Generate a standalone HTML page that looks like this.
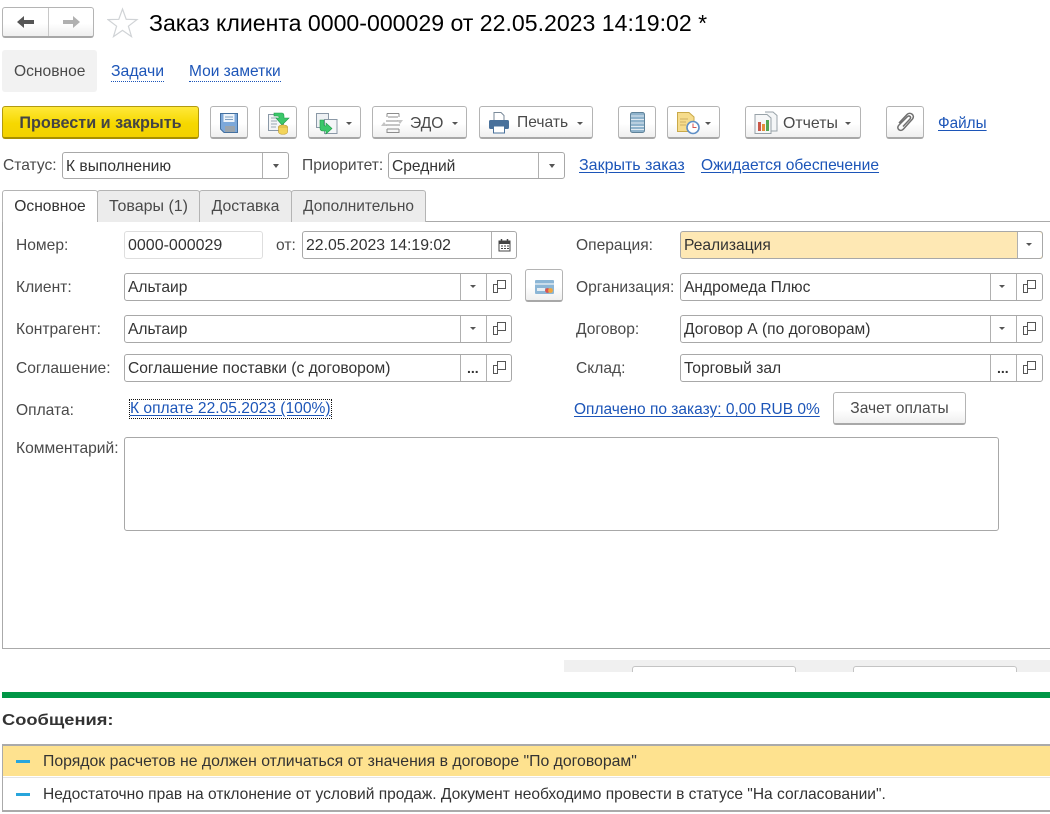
<!DOCTYPE html>
<html lang="ru"><head><meta charset="utf-8"><title>Заказ клиента</title>
<style>
html,body{margin:0;padding:0;background:#fff}
body{position:relative;width:1050px;height:814px;overflow:hidden;font:15.6px/18px "Liberation Sans","Noto Sans CJK SC",sans-serif;color:#333}
.a{position:absolute;white-space:nowrap}
.l{position:absolute;white-space:nowrap;color:#4a4a4a;height:18px;margin-top:2px}
.lk{position:absolute;white-space:nowrap;color:#1c55b8;text-decoration:underline;text-underline-offset:2px;height:18px;margin-top:1px}
.dot{position:absolute;white-space:nowrap;color:#1c55b8;border-bottom:1px dotted #1c55b8;height:18px;margin-top:1px}
.btn{position:absolute;box-sizing:border-box;height:33px;top:106px;border:1px solid #b4b4b4;border-bottom:2px solid #a8a8a8;border-radius:3px;background:linear-gradient(#fff 0%,#fff 55%,#efefef 100%);color:#4a4a4a}
.btn span{position:absolute;top:6px;margin-top:1px;white-space:nowrap}
.btn svg{position:absolute}
.f{position:absolute;box-sizing:border-box;height:28px;border:1px solid #a8a8a8;border-radius:3px;background:#fff}
.f .t{position:absolute;left:3px;top:4px;margin-top:1px;white-space:nowrap;color:#333}
.f i{position:absolute;top:0;bottom:0;width:1px;background:#b0b0b0}
.tri{position:absolute;top:11px;width:0;height:0;border-left:3.5px solid transparent;border-right:3.5px solid transparent;border-top:4px solid #555}
.trb{position:absolute;top:15px;width:0;height:0;border-left:3.5px solid transparent;border-right:3.5px solid transparent;border-top:3px solid #555}
.dots{position:absolute;top:1px;color:#333;font-weight:bold;font-size:14px;letter-spacing:0}
.open{position:absolute;top:6px;width:13px;height:13px}
.tab{position:absolute;box-sizing:border-box;top:190px;height:32px;border:1px solid #b4b4b4;border-bottom:none;border-radius:3px 3px 0 0;background:#ececec;color:#4a4a4a;text-align:center;padding-top:6px;font-size:15.4px}
</style></head><body>

<!-- nav -->
<div class="a" style="left:2px;top:7px;width:92px;height:31px;box-sizing:border-box;border:1px solid #b4b4b4;border-bottom:2px solid #a8a8a8;border-radius:3px;background:linear-gradient(#fff 55%,#efefef)"></div>
<div class="a" style="left:48px;top:8px;width:1px;height:28px;background:#c8c8c8"></div>
<svg class="a" style="left:16px;top:15px" width="20" height="14"><path d="M1 7 L8 1 V5 H18 V9 H8 V13 Z" fill="#555"/></svg>
<svg class="a" style="left:61px;top:15px" width="20" height="14"><path d="M19 7 L12 1 V5 H2 V9 H12 V13 Z" fill="#b0b0b0"/></svg>
<svg class="a" style="left:107px;top:7px" width="32" height="31"><path d="M15.500 2 L19.200 12.300 L30 12.600 L21.400 19.200 L24.500 29.600 L15.500 23.400 L6.500 29.600 L9.600 19.200 L1 12.600 L11.800 12.300 Z" fill="#fff" stroke="#d0d3d6" stroke-width="1.200"/></svg>
<div class="a" style="left:149px;top:9px;font-size:23.1px;line-height:28px;color:#000">Заказ клиента 0000-000029 от 22.05.2023 14:19:02 *</div>

<!-- top nav tabs -->
<div class="a" style="left:2px;top:50px;width:95px;height:42px;background:#f2f2f2;border-radius:3px"></div>
<div class="a" style="left:14px;top:63px;color:#4a4a4a">Основное</div>
<div class="dot" style="left:111px;top:62px;font-size:15.8px">Задачи</div>
<div class="dot" style="left:189px;top:62px;font-size:15.5px">Мои заметки</div>

<!-- toolbar -->
<div class="btn" style="left:2px;width:197px;border-color:#b29a10;border-bottom-color:#a88f00;background:linear-gradient(#ffe93a,#f6d800 55%,#f3d100);color:#444;font-weight:bold;text-align:center;padding-top:7px;font-size:16.2px">Провести и закрыть</div>

<div class="btn" style="left:210px;width:38px"><svg style="left:9px;top:6px" width="18" height="20"><path d="M.5 .5 H17.500 V19.500 H4 L.5 16 Z" fill="#7ca8da" stroke="#44709f"/><rect x="3.500" y="1" width="11" height="8" fill="#eef4fa"/><path d="M5 4 H13 M5 6.500 H13" stroke="#7f9fc0"/><rect x="5" y="13" width="10" height="6" fill="#9aa4ad"/></svg></div>

<div class="btn" style="left:259px;width:38px"><svg style="left:8px;top:5px" width="22" height="23"><rect x=".5" y="2.500" width="15" height="16" fill="#f3f5f7" stroke="#8a98a6"/><path d="M3 6 H9 M3 9 H9 M3 12 H9 M3 15 H8" stroke="#9aa7b3"/><path d="M6 1 H14 Q16 1 16 4 V6 H21 L14 13 L8 6 H11 V5 Q11 4 9 4 H6 Z" fill="#3cc76a" stroke="#1f9a48" stroke-width=".6"/><ellipse cx="15" cy="15" rx="4.500" ry="2" fill="#f3d45a" stroke="#b9962a" stroke-width=".6"/><path d="M10.500 15 V20 C10.500 23 19.500 23 19.500 20 V15 Z" fill="#f3d45a" stroke="#b9962a" stroke-width=".6"/></svg></div>

<div class="btn" style="left:308px;width:53px"><svg style="left:7px;top:6px" width="22" height="22"><rect x=".5" y=".5" width="12" height="14" fill="#eef1f4" stroke="#8a98a6"/><rect x="8.500" y="6.500" width="12.500" height="14" fill="#f4f6f8" stroke="#8a98a6"/><path d="M4 7 H8 V12 Q8 13 10 13 V10 L16 15.500 L10 21 V18 H7 Q4 18 4 15 Z" fill="#3cc76a" stroke="#1f9a48" stroke-width=".6"/></svg><div class="trb" style="left:37px"></div></div>

<div class="btn" style="left:372px;width:95px"><svg style="left:8px;top:6px" width="22" height="20" fill="none"><path d="M6 .5 H18 M6 .5 V4 M18 .5 V4 M7 4 H17 M5 8 H19 M5 12 H19 M6 16 H18 M6 16 V19.500 H18 V16" stroke="#8c8c8c"/><path d="M0 13 L3 9 L6 13 Z M16 7 L19 11 L22 7 Z" fill="#c4c4c4"/></svg><span style="left:37px;margin-top:2px">ЭДО</span><div class="trb" style="left:79px"></div></div>

<div class="btn" style="left:479px;width:114px"><svg style="left:9px;top:5px" width="20" height="22"><path d="M5 .5 H12 L15 3.500 V9 H5 Z" fill="#fff" stroke="#7a8a99"/><rect x="0" y="8" width="20" height="9" rx="1.500" fill="#49719b"/><rect x="4.500" y="14" width="11" height="7" fill="#fff" stroke="#49719b"/></svg><span style="left:37px">Печать</span><div class="trb" style="left:97px"></div></div>

<div class="btn" style="left:618px;width:38px"><svg style="left:11px;top:5px" width="15" height="22"><rect x=".5" y=".5" width="14" height="20" rx="2" fill="#8fb3cc" stroke="#5f8299"/><path d="M1 4 H14 M1 7.500 H14 M1 11 H14 M1 14.500 H14 M1 17.500 H14" stroke="#dfeaf2" stroke-width="1"/></svg></div>

<div class="btn" style="left:667px;width:53px"><svg style="left:9px;top:5px" width="24" height="23"><path d="M.5 .5 H12 L17 5 V19.500 H.5 Z" fill="#f6dc8c" stroke="#c9a94a"/><path d="M3 7 H11 M3 10 H9 M3 13 H9" stroke="#cdb164"/><circle cx="16" cy="15.500" r="6" fill="#fff" stroke="#5f8fc6" stroke-width="1.600"/><path d="M16 11.500 V15.500 H19.500" stroke="#d9534f" fill="none"/></svg><div class="trb" style="left:37px"></div></div>

<div class="btn" style="left:745px;width:116px"><svg style="left:8px;top:4px" width="24" height="24"><path d="M11 1 H19 L23 4.500 V20 H17" fill="#f4f6f7" stroke="#98a2a8"/><path d="M1 3.500 H13 L17 7 V22.500 H1 Z" fill="#f6f7f8" stroke="#98a2a8"/><rect x="4" y="11" width="3" height="9" fill="#c9584a"/><rect x="8" y="13" width="3" height="7" fill="#e58e3a"/><rect x="12" y="9" width="3" height="11" fill="#53a653"/></svg><span style="left:37px;margin-top:2px;font-size:15.9px">Отчеты</span><div class="trb" style="left:99px"></div></div>

<div class="btn" style="left:886px;width:38px"><svg style="left:9px;top:5px" width="20" height="21" fill="none" stroke="#707070" stroke-width="1.500"><path d="M3 11 L11 2.500 C14 -.5 19.500 3 16.500 7 L7.500 17 C4.500 20.500 -.5 16.500 3 13 L11.500 4.500 C13.500 3 15.500 5 14 7 L7 14.500"/></svg></div>

<div class="lk" style="left:938px;top:114px;font-size:15.3px">Файлы</div>

<!-- status row -->
<div class="l" style="left:3px;top:155px">Статус:</div>
<div class="f" style="left:62px;top:152px;width:227px;height:27px"><div class="t">К выполнению</div><i style="left:199px"></i><div class="tri" style="left:210px"></div></div>
<div class="l" style="left:302px;top:155px">Приоритет:</div>
<div class="f" style="left:388px;top:152px;width:177px;height:27px"><div class="t">Средний</div><i style="left:149px"></i><div class="tri" style="left:160px"></div></div>
<div class="lk" style="left:579px;top:156px;font-size:16px">Закрыть заказ</div>
<div class="lk" style="left:701px;top:156px">Ожидается обеспечение</div>

<!-- tabs -->
<div class="a" style="left:2px;top:221px;width:1048px;height:428px;box-sizing:border-box;border:1px solid #aaa;border-right:none"></div>
<div class="tab" style="left:2px;width:96px;height:32px;background:#fff;color:#333;padding-top:7px;font-size:15.6px">Основное</div>
<div class="tab" style="left:97px;width:103px;padding-top:7px;font-size:16px">Товары (1)</div>
<div class="tab" style="left:199px;width:93px;padding-top:7px;font-size:15.8px">Доставка</div>
<div class="tab" style="left:291px;width:135px;padding-top:7px">Дополнительно</div>

<!-- left column -->
<div class="l" style="left:16px;top:235px">Номер:</div>
<div class="f" style="left:124px;top:231px;width:139px;border-color:#dedede"><div class="t" style="font-size:16px">0000-000029</div></div>
<div class="l" style="left:276px;top:235px">от:</div>
<div class="f" style="left:302px;top:231px;width:215px"><div class="t" style="font-size:15.8px">22.05.2023 14:19:02</div><i style="left:188px"></i>
<svg style="position:absolute;left:195px;top:6px" width="13" height="14"><path d="M1 3 H12 V13 H1 Z" fill="#fff" stroke="#444"/><rect x="1" y="3" width="11" height="3" fill="#444"/><path d="M3.500 1 V4 M9.500 1 V4" stroke="#444" stroke-width="1.500"/><path d="M3 8 H5 M6 8 H8 M9 8 H11 M3 10.500 H5 M6 10.500 H8 M9 10.500 H11" stroke="#444"/></svg></div>

<div class="l" style="left:16px;top:277px">Клиент:</div>
<div class="f" style="left:124px;top:273px;width:388px"><div class="t">Альтаир</div><i style="left:335px"></i><i style="left:361px"></i><div class="trb" style="left:345px;top:11px"></div>
<svg class="open" style="left:368px;top:6px" viewBox="0 0 13 13" fill="none" stroke="#555"><rect x="4.500" y=".5" width="8" height="8"/><path d="M4.500 4.500 H.5 V12.500 H4.500 V8.500"/></svg></div>

<div class="btn" style="left:525px;top:269px;width:38px"><svg style="left:9px;top:10px" width="19" height="15"><rect x="0" y="0" width="19" height="14" rx="1" fill="#8cb6d6"/><rect x="0" y="3" width="19" height="2" fill="#c9dcea"/><rect x="2" y="8" width="8" height="3" fill="#e6eef4"/><circle cx="12.500" cy="10.500" r="2.400" fill="#d9534f"/><circle cx="15.500" cy="10.500" r="2.400" fill="#f0a63c"/></svg></div>

<div class="l" style="left:16px;top:319px">Контрагент:</div>
<div class="f" style="left:124px;top:315px;width:388px"><div class="t">Альтаир</div><i style="left:335px"></i><i style="left:361px"></i><div class="trb" style="left:345px;top:11px"></div>
<svg class="open" style="left:368px;top:6px" viewBox="0 0 13 13" fill="none" stroke="#555"><rect x="4.500" y=".5" width="8" height="8"/><path d="M4.500 4.500 H.5 V12.500 H4.500 V8.500"/></svg></div>

<div class="l" style="left:16px;top:358px">Соглашение:</div>
<div class="f" style="left:124px;top:354px;width:388px"><div class="t">Соглашение поставки (с договором)</div><i style="left:335px"></i><i style="left:361px"></i><div class="dots" style="left:342px;top:4px">...</div>
<svg class="open" style="left:368px;top:6px" viewBox="0 0 13 13" fill="none" stroke="#555"><rect x="4.500" y=".5" width="8" height="8"/><path d="M4.500 4.500 H.5 V12.500 H4.500 V8.500"/></svg></div>

<div class="l" style="left:16px;top:400px">Оплата:</div>
<div class="a" style="left:130px;top:400px;height:18px;color:#1c55b8;outline:1px dotted #111;text-decoration:underline;text-underline-offset:2px">К оплате 22.05.2023 (100%)</div>
<div class="l" style="left:16px;top:438px">Комментарий:</div>
<div class="f" style="left:124px;top:437px;width:875px;height:94px"></div>

<!-- right column -->
<div class="l" style="left:576px;top:235px">Операция:</div>
<div class="f" style="left:680px;top:231px;width:363px;background:#fee8b4"><div class="t">Реализация</div><i style="left:336px"></i><div style="position:absolute;left:337px;top:0;right:0;bottom:0;background:#fff;border-radius:0 3px 3px 0"></div><div class="trb" style="left:345px;top:11px"></div></div>

<div class="l" style="left:576px;top:277px">Организация:</div>
<div class="f" style="left:680px;top:273px;width:363px"><div class="t">Андромеда Плюс</div><i style="left:309px"></i><i style="left:335px"></i><div class="trb" style="left:318px;top:11px"></div>
<svg class="open" style="left:342px;top:6px" viewBox="0 0 13 13" fill="none" stroke="#555"><rect x="4.500" y=".5" width="8" height="8"/><path d="M4.500 4.500 H.5 V12.500 H4.500 V8.500"/></svg></div>

<div class="l" style="left:576px;top:319px">Договор:</div>
<div class="f" style="left:680px;top:315px;width:363px"><div class="t">Договор А (по договорам)</div><i style="left:309px"></i><i style="left:335px"></i><div class="trb" style="left:318px;top:11px"></div>
<svg class="open" style="left:342px;top:6px" viewBox="0 0 13 13" fill="none" stroke="#555"><rect x="4.500" y=".5" width="8" height="8"/><path d="M4.500 4.500 H.5 V12.500 H4.500 V8.500"/></svg></div>

<div class="l" style="left:576px;top:358px">Склад:</div>
<div class="f" style="left:680px;top:354px;width:363px"><div class="t">Торговый зал</div><i style="left:309px"></i><i style="left:335px"></i><div class="dots" style="left:316px;top:4px">...</div>
<svg class="open" style="left:342px;top:6px" viewBox="0 0 13 13" fill="none" stroke="#555"><rect x="4.500" y=".5" width="8" height="8"/><path d="M4.500 4.500 H.5 V12.500 H4.500 V8.500"/></svg></div>

<div class="lk" style="left:574px;top:400px;font-size:15.5px">Оплачено по заказу: 0,00 RUB 0%</div>
<div class="btn" style="left:833px;top:392px;width:133px;text-align:center;padding-top:7px">Зачет оплаты</div>

<!-- clipped footer bar -->
<div class="a" style="left:564px;top:660px;width:486px;height:12px;background:#f0f0f0;overflow:hidden">
<div class="a" style="left:68px;top:6px;width:164px;height:20px;box-sizing:border-box;border:1px solid #c4c4c4;border-radius:3px;background:#fff"></div>
<div class="a" style="left:289px;top:6px;width:164px;height:20px;box-sizing:border-box;border:1px solid #c4c4c4;border-radius:3px;background:#fff"></div>
</div>

<!-- messages -->
<div class="a" style="left:2px;top:692px;width:1048px;height:6px;background:#009646"></div>
<div class="a" style="left:2px;top:712px;font-weight:bold;font-size:15.5px;color:#333;transform:scaleX(1.18);transform-origin:0 0">Сообщения:</div>
<div class="a" style="left:2px;top:744px;width:1048px;height:68px;box-sizing:border-box;border:1px solid #aaa;border-right:none;border-top:2px solid #aaa;border-bottom:2px solid #aaa"></div>
<div class="a" style="left:3px;top:746px;width:1047px;height:30px;background:#fee28f"></div>
<div class="a" style="left:3px;top:777px;width:1047px;height:1px;background:#e4e4e4"></div>
<div class="a" style="left:16px;top:760px;width:14px;height:3px;background:#28a5dc"></div>
<div class="a" style="left:16px;top:793px;width:14px;height:3px;background:#28a5dc"></div>
<div class="a" style="left:43px;top:753px;font-size:15.8px">Порядок расчетов не должен отличаться от значения в договоре "По договорам"</div>
<div class="a" style="left:43px;top:786px;font-size:15.55px">Недостаточно прав на отклонение от условий продаж. Документ необходимо провести в статусе "На согласовании".</div>

</body></html>
